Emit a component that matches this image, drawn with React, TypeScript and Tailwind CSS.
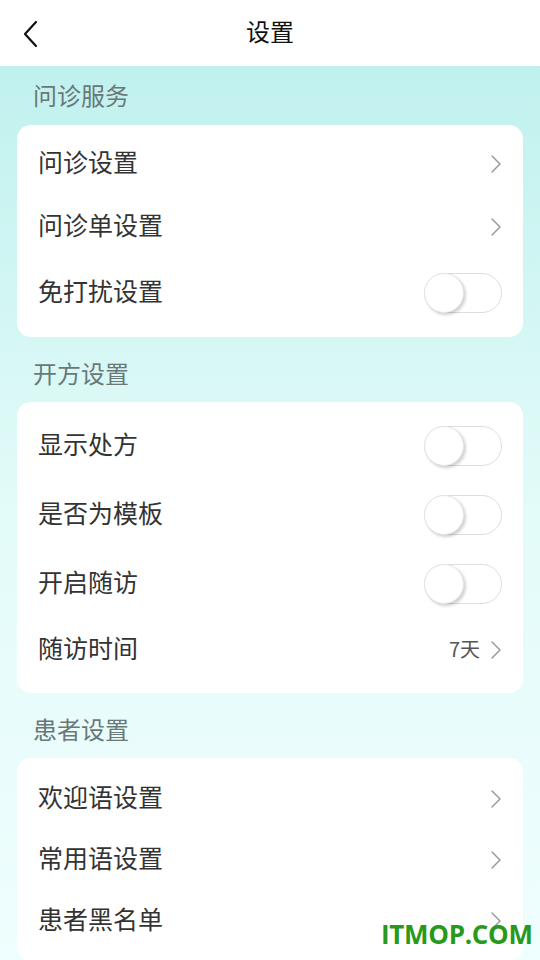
import React from "react";

const font = { fontFamily: '"Noto Sans CJK SC", "Noto Sans", sans-serif' };

function Chevron() {
  return (
    <svg width="12" height="20" viewBox="0 0 12 20" className="shrink-0">
      <path d="M2 2 L10 10 L2 18" fill="none" stroke="#9a9a9a" strokeWidth="1.5" strokeLinecap="round" strokeLinejoin="round" />
    </svg>
  );
}

function Toggle() {
  return (
    <div className="relative w-[78px] h-[40px] rounded-full border border-[#dedede] bg-white">
      <div className="absolute left-[-1px] top-[-1px] w-[40px] h-[40px] rounded-full bg-white border border-[#e6e6e6] shadow-[2px_2px_3px_rgba(0,0,0,0.18)]" />
    </div>
  );
}

function Row({ label, h, right }: { label: string; h: string; right: React.ReactNode }) {
  return (
    <div className={`flex items-center justify-between ${h}`}>
      <span className="relative top-[-2px] text-[25px] leading-none text-[#333333]">{label}</span>
      {right}
    </div>
  );
}

function SectionTitle({ text, first }: { text: string; first?: boolean }) {
  return (
    <div className={`${first ? "pt-[18px] pb-[15px]" : "pt-[25px] pb-[14px]"} pl-[16px]`}>
      <div className="relative top-[-2px] text-[24px] leading-[26px] text-[#6a7878]">{text}</div>
    </div>
  );
}

export default function App() {
  return (
    <div style={font} className="relative w-[540px] h-[960px] overflow-hidden bg-white">
      <div className="relative h-[66px] bg-white flex items-center justify-center">
        <svg width="20" height="30" viewBox="0 0 20 30" className="absolute left-[20px] top-[19px]">
          <path d="M16 3 L5 15 L16 27" fill="none" stroke="#111" strokeWidth="2.2" strokeLinecap="round" strokeLinejoin="round" />
        </svg>
        <span className="relative top-[-2px] text-[24px] text-[#111]">设置</span>
      </div>
      <div className="h-[894px] bg-gradient-to-b from-[#c0f1ee] via-[#e3fbf9] to-[#effefe] px-[17px]">
        <SectionTitle text="问诊服务" first />
        <div className="bg-white rounded-[14px] px-[21px] pt-[7px] pb-[10px]">
          <Row label="问诊设置" h="h-[63px]" right={<Chevron />} />
          <Row label="问诊单设置" h="h-[63px]" right={<Chevron />} />
          <Row label="免打扰设置" h="h-[69px]" right={<Toggle />} />
        </div>
        <SectionTitle text="开方设置" />
        <div className="bg-white rounded-[14px] px-[21px] pt-[9px] pb-[12px]">
          <Row label="显示处方" h="h-[69px]" right={<Toggle />} />
          <Row label="是否为模板" h="h-[69px]" right={<Toggle />} />
          <Row label="开启随访" h="h-[69px]" right={<Toggle />} />
          <Row
            label="随访时间"
            h="h-[63px]"
            right={
              <div className="flex items-center gap-[10px]">
                <span className="relative top-[-1px] text-[20px] text-[#555]">7天</span>
                <Chevron />
              </div>
            }
          />
        </div>
        <SectionTitle text="患者设置" />
        <div className="bg-white rounded-[14px] px-[21px] pt-[10px] pb-[10px]">
          <Row label="欢迎语设置" h="h-[61px]" right={<Chevron />} />
          <Row label="常用语设置" h="h-[61px]" right={<Chevron />} />
          <Row label="患者黑名单" h="h-[61px]" right={<Chevron />} />
        </div>
      </div>
      <div
        className="absolute left-[381px] top-[921px] text-[26px] font-bold text-[#28991a] leading-none tracking-[-0.3px]"
        style={{ fontFamily: '"Open Sans", "DejaVu Sans", sans-serif' }}
      >
        ITMOP.COM
      </div>
    </div>
  );
}
